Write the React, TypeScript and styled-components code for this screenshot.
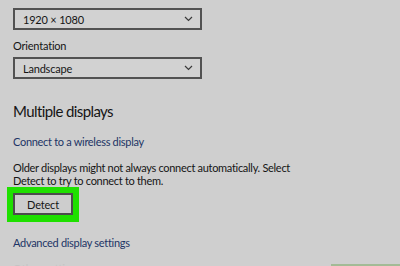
import React from 'react';
import styled, { createGlobalStyle } from 'styled-components';

const GlobalStyle = createGlobalStyle`
  html, body {
    margin: 0;
    padding: 0;
    background: #cfcfcf;
  }
  body {
    font-family: Lato, 'Noto Sans', sans-serif;
    color: #151515;
    overflow: hidden;
  }
`;

const Page = styled.div`
  width: 400px;
  height: 266px;
  overflow: hidden;
  position: relative;
  display: flex;
  flex-direction: column;
  align-items: flex-start;
  padding: 0 0 0 13px;
  box-sizing: border-box;

  & > * {
    flex-shrink: 0;
  }
`;

const Select = styled.div<{ $top: number }>`
  margin-top: ${(p) => p.$top}px;
  width: 189px;
  height: 22px;
  box-sizing: border-box;
  border: 2px solid #525252;
  background: #d2d2d2;
  display: flex;
  align-items: center;
  justify-content: space-between;
  padding: 0 7px 0 8px;
  font-size: 11px;
  letter-spacing: -0.2px;
`;

const Label = styled.div<{ $top: number }>`
  margin-top: ${(p) => p.$top}px;
  font-size: 11px;
  line-height: 14px;
  letter-spacing: -0.2px;
`;

const Heading = styled.div`
  margin-top: 22px;
  font-size: 15px;
  line-height: 20px;
  letter-spacing: -0.6px;
`;

const Link = styled.div<{ $top: number }>`
  margin-top: ${(p) => p.$top}px;
  font-size: 11px;
  line-height: 14px;
  letter-spacing: -0.3px;
  color: #1d3566;
`;

const Para = styled.div`
  margin-top: 12px;
  font-size: 11px;
  line-height: 13px;
  letter-spacing: -0.3px;
  width: 300px;
`;

const Highlight = styled.div`
  margin: 0 0 0 -6px;
  padding: 6px 6px 7px 6px;
  background: #1fe000;
`;

const Button = styled.div`
  width: 60px;
  height: 22px;
  box-sizing: border-box;
  border: 2px solid #4c4c4c;
  background: #cdcdcd;
  font-size: 11px;
  letter-spacing: -0.2px;
  display: flex;
  align-items: center;
  justify-content: center;
`;

const Faded = styled.div`
  margin-top: 12px;
  font-size: 11px;
  line-height: 14px;
  color: #c4c4c4;
`;

const GreenBar = styled.div`
  position: absolute;
  right: 0;
  bottom: 0;
  width: 69px;
  height: 2px;
  background: #a3bb96;
`;

const Chevron = () => (
  <svg width="9" height="6" viewBox="0 0 9 6" fill="none">
    <path d="M1 1l3.5 3.5L8 1" stroke="#3a3a3a" strokeWidth="1.2" />
  </svg>
);

export default function App() {
  return (
    <Page>
      <GlobalStyle />
      <Select $top={8}>
        <span>1920 × 1080</span>
        <Chevron />
      </Select>
      <Label $top={9}>Orientation</Label>
      <Select $top={4}>
        <span>Landscape</span>
        <Chevron />
      </Select>
      <Heading>Multiple displays</Heading>
      <Link $top={14}>Connect to a wireless display</Link>
      <Para>
        Older displays might not always connect automatically. Select
        Detect to try to connect to them.
      </Para>
      <Highlight>
        <Button>Detect</Button>
      </Highlight>
      <Link $top={14}>Advanced display settings</Link>
      <Faded>Other settings</Faded>
      <GreenBar />
    </Page>
  );
}
